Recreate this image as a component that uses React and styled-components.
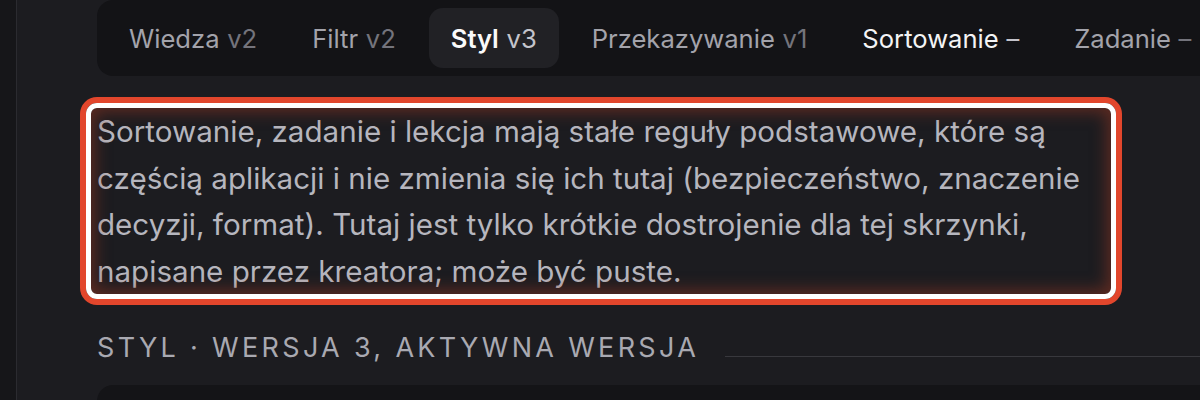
import React from "react";
import styled, { createGlobalStyle } from "styled-components";

const Global = createGlobalStyle`
  html, body { margin: 0; padding: 0; background: #1c1c20; }
  body { font-family: Inter, "Noto Sans", sans-serif; overflow: hidden; }
  #root { height: 400px; }
`;

const Page = styled.div`
  display: flex;
  height: 400px;
  overflow: hidden;
`;

const Sidebar = styled.aside`
  flex: 0 0 16px;
  background: #161619;
  border-right: 1px solid #2b2b30;
`;

const Main = styled.main`
  flex: 1;
  min-width: 0;
  padding-left: 80px;
  overflow: hidden;
`;

const Column = styled.div`
  width: 1300px;
  display: flex;
  flex-direction: column;
`;

const TabBar = styled.nav`
  display: flex;
  gap: 11px;
  padding: 8px 10px;
  background: #131316;
  border-radius: 16px;
`;

const Tab = styled.div`
  display: flex;
  align-items: center;
  height: 60px;
  padding: 0 22px;
  border-radius: 14px;
  font-size: 25.6px;
  white-space: nowrap;
  background: ${(p) => (p.$active ? "#212125" : "transparent")};
  color: ${(p) => (p.$active ? "#fafafa" : p.$bright ? "#f4f4f5" : "#a3a3ab")};
  font-weight: ${(p) => (p.$active ? 600 : 400)};
`;

const Version = styled.span`
  margin-left: 0.3em;
  color: ${(p) => (p.$active ? "#c4c4cb" : "#74747c")};
  font-weight: 400;
`;

const Paragraph = styled.p`
  position: relative;
  margin: 32px 0 0;
  width: 1008px;
  font-size: 29.6px;
  line-height: 46.5px;
  color: #b6b6be;

  &::after {
    content: "";
    position: absolute;
    top: -5px;
    bottom: -5px;
    left: -11px;
    right: -11px;
    border: 5px solid #ffffff;
    border-radius: 11px;
    box-shadow: 0 0 0 6px #e2462c, inset 0 0 16px 4px rgba(150, 55, 35, 0.55);
    pointer-events: none;
  }
`;

const SectionHead = styled.div`
  display: flex;
  align-items: baseline;
  gap: 26px;
  margin-top: 38px;
`;

const SectionTitle = styled.h2`
  margin: 0;
  font-size: 27px;
  line-height: 31px;
  font-weight: 400;
  letter-spacing: 0.123em;
  text-transform: uppercase;
  color: #a9a9b1;
  white-space: nowrap;
`;

const Rule = styled.div`
  flex: 1;
  height: 1px;
  margin-bottom: 1px;
  background: #38383d;
`;

const Panel = styled.section`
  margin-top: 22px;
  height: 200px;
  background: #141417;
  border-radius: 16px;
`;

const tabs = [
  { name: "Wiedza", v: "v2" },
  { name: "Filtr", v: "v2" },
  { name: "Styl", v: "v3", active: true },
  { name: "Przekazywanie", v: "v1" },
  { name: "Sortowanie", v: "–", bright: true },
  { name: "Zadanie", v: "–" },
];

export default function App() {
  return (
    <>
      <Global />
      <Page>
        <Sidebar />
        <Main>
          <Column>
            <TabBar>
              {tabs.map((t) => (
                <Tab key={t.name} $active={t.active} $bright={t.bright}>
                  {t.name}
                  <Version $active={t.active || t.bright}>{t.v}</Version>
                </Tab>
              ))}
            </TabBar>
            <Paragraph>
              Sortowanie, zadanie i lekcja mają stałe reguły podstawowe, które są
              częścią aplikacji i nie zmienia się ich tutaj (bezpieczeństwo, znaczenie
              decyzji, format). Tutaj jest tylko krótkie dostrojenie dla tej skrzynki,
              napisane przez kreatora; może być puste.
            </Paragraph>
            <SectionHead>
              <SectionTitle>Styl · wersja 3, aktywna wersja</SectionTitle>
              <Rule />
            </SectionHead>
            <Panel />
          </Column>
        </Main>
      </Page>
    </>
  );
}
